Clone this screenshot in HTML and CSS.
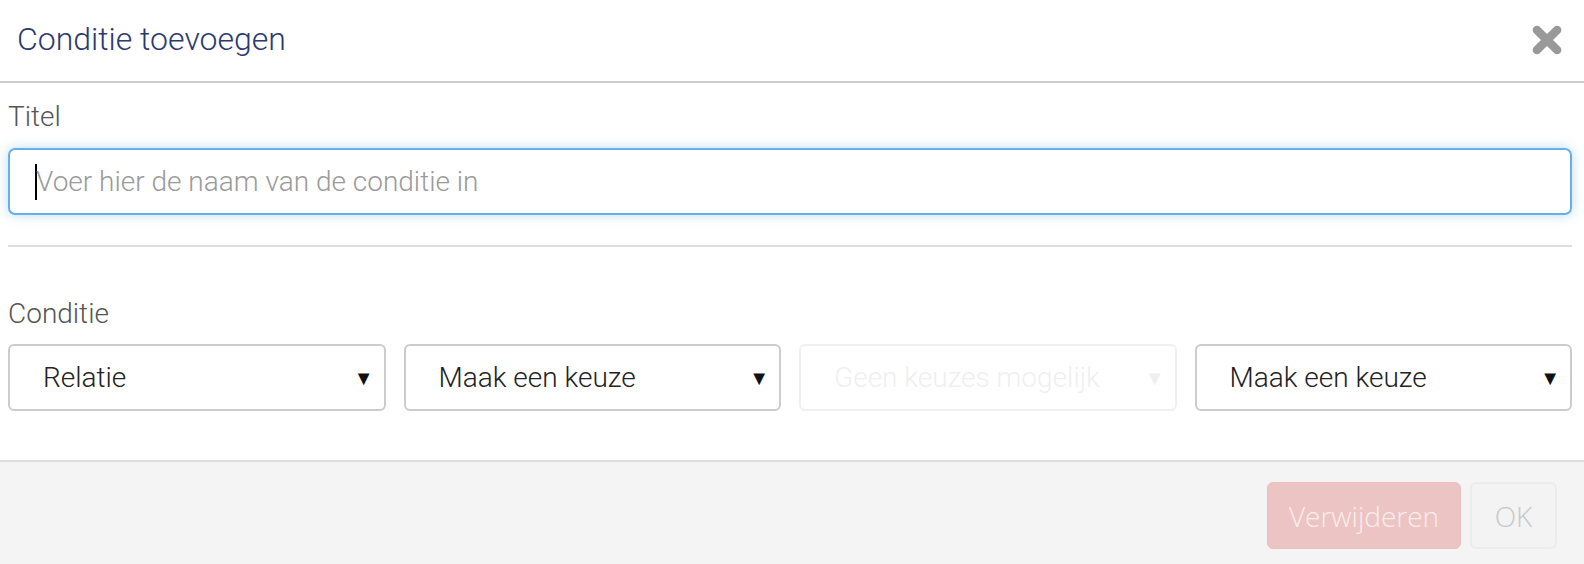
FILE: index.html
```html
<!DOCTYPE html>
<html>
<head>
<meta charset="utf-8">
<link rel="stylesheet" href="styles.css">
</head>
<body>
<div class="modal">
  <div class="modal-header">
    <h1 class="modal-title">Conditie toevoegen</h1>
    <button class="close" aria-label="Sluiten">
      <svg width="34" height="34" viewBox="0 0 32 32">
        <path d="M6.5 6.5 L25.5 25.5 M25.5 6.5 L6.5 25.5" stroke="#999" stroke-width="8" stroke-linecap="round"/>
      </svg>
    </button>
  </div>
  <div class="modal-body">
    <label class="label label-title">Titel</label>
    <div class="input focus"><span class="caret"></span><span class="placeholder">Voer hier de naam van de conditie in</span></div>
    <hr class="divider">
    <label class="label label-cond">Conditie</label>
    <div class="selects">
      <div class="select"><span>Relatie</span><span class="arrow">▼</span></div>
      <div class="select"><span>Maak een keuze</span><span class="arrow">▼</span></div>
      <div class="select disabled"><span>Geen keuzes mogelijk</span><span class="arrow">▼</span></div>
      <div class="select"><span>Maak een keuze</span><span class="arrow">▼</span></div>
    </div>
  </div>
  <div class="modal-footer">
    <button class="btn btn-danger">Verwijderen</button>
    <button class="btn btn-default">OK</button>
  </div>
</div>
</body>
</html>
```

FILE: styles.css
```css
* {
  box-sizing: border-box;
}
html, body {
  margin: 0;
  padding: 0;
  background: #fff;
  overflow: hidden;
}
body {
  font-family: Roboto, "Liberation Sans", sans-serif;
  font-weight: 300;
}
.modal {
  display: flex;
  flex-direction: column;
  height: 100vh;
  overflow: hidden;
}
.modal-header {
  height: 83px;
  flex: 0 0 auto;
  border-bottom: 2px solid #cccccc;
  display: flex;
  align-items: center;
  justify-content: space-between;
  padding: 0 20px 0 17px;
}
.modal-title {
  margin: 0;
  font-size: 32px;
  font-weight: 300;
  color: #2b3a6e;
  padding-bottom: 3px;
}
.close {
  border: none;
  background: none;
  padding: 0;
  width: 34px;
  height: 34px;
  display: flex;
  margin-bottom: 2px;
}
.modal-body {
  padding: 0 12px 0 8px;
  flex: 0 0 377px;
}
.label {
  display: block;
  font-size: 28px;
  line-height: 32px;
  color: #555;
}
.label-title {
  margin-top: 18px;
  margin-bottom: 15px;
}
.input {
  height: 67px;
  border: 2px solid #66afe9;
  border-radius: 7px;
  box-shadow: 0 0 12px rgba(102, 175, 233, 0.45);
  display: flex;
  align-items: center;
  padding-left: 25px;
  font-size: 28px;
}
.caret {
  width: 2px;
  height: 36px;
  background: #000;
  margin-right: -1px;
}
.placeholder {
  color: #9a9a9a;
}
.divider {
  border: none;
  border-top: 2px solid #dddddd;
  margin: 30px 0 0 0;
  height: 0;
}
.label-cond {
  margin-top: 51px;
  margin-bottom: 14px;
}
.selects {
  display: grid;
  grid-template-columns: repeat(4, minmax(0, 1fr));
  gap: 18px;
}
.select {
  height: 67px;
  border: 2px solid #cccccc;
  border-radius: 6px;
  display: flex;
  align-items: center;
  justify-content: space-between;
  padding: 0 10px 0 33px;
  font-size: 28px;
  color: #222;
  overflow: hidden;
  white-space: nowrap;
}
.arrow {
  font-size: 20px;
  color: #111;
  font-family: "DejaVu Sans", sans-serif;
}
.select.disabled {
  border-color: #f0f0f0;
  color: #efefef;
}
.select.disabled .arrow {
  color: #efefef;
}
.modal-footer {
  flex: 1 1 auto;
  min-height: 0;
  background: #f4f4f4;
  border-top: 2px solid #dddddd;
  display: flex;
  justify-content: flex-end;
  align-items: flex-start;
  padding: 20px 27px 0 0;
  gap: 9px;
}
.btn {
  height: 67px;
  border-radius: 6px;
  font-family: "Open Sans", "Liberation Sans", sans-serif;
  font-size: 28px;
  font-weight: 300;
}
.btn-danger {
  width: 194px;
  background: #edc4c4;
  border: 1px solid #ebc0c0;
  color: #faeded;
}
.btn-default {
  width: 87px;
  background: #f3f3f3;
  border: 2px solid #ececec;
  color: #c8c8c8;
}
```
